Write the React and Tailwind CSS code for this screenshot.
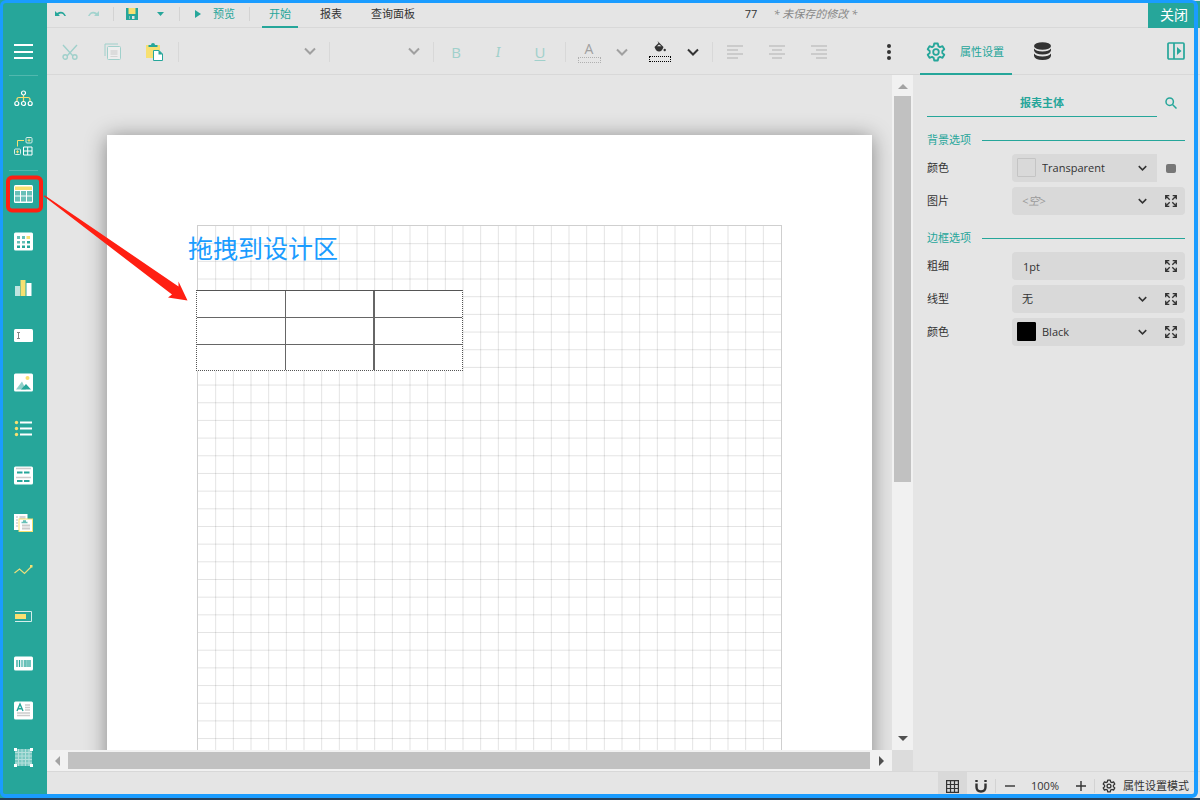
const tools = [
  { id: 'table', label: '表格' },
  { id: 'matrix', label: '矩表' },
  { id: 'chart', label: '图表' },
  { id: 'textbox', label: '文本框' },
  { id: 'image', label: '图像' },
  { id: 'list', label: '列表' },
  { id: 'banded', label: '带状列表' },
  { id: 'subreport', label: '子报表' },
  { id: 'sparkline', label: '迷你图' },
  { id: 'bullet', label: '数据条' },
  { id: 'barcode', label: '条形码' },
  { id: 'richtext', label: '富文本' },
  { id: 'container', label: '容器' },
]

const shapes = {
  tree: (
    <g fill="none" stroke="#fff" strokeWidth="1.2">
      <path d="M3 11V9.5Q3 7.5 5 7.5H14Q16 7.5 16 9.5V11M9.5 5V11" stroke="#f7e071" />
      <circle cx="9.5" cy="3" r="2" />
      <circle cx="2.8" cy="13.5" r="2" />
      <circle cx="9.5" cy="13.5" r="2" />
      <circle cx="16.2" cy="13.5" r="2" />
    </g>
  ),
  groups: (
    <g fill="none" stroke="#d5eeeb" strokeWidth="1">
      <path d="M3.5 9.5V3.5H10" stroke="#f7e071" />
      <rect x="12" y=".5" width="6" height="5.5" rx="1" />
      <rect x=".5" y="12" width="6" height="5.5" rx="1" />
      <path d="M13.5 3.3h3M15 1.8v3M2 14.8h3M3.5 13.3v3" stroke="#f7e071" />
      <path d="M9.5 10h8.5v8h-8.5zM13.7 10v8M9.5 14h8.5" stroke="#fff" />
    </g>
  ),
  table: (
    <>
      <rect width="19" height="18" rx="1.5" fill="#fff" />
      <path d="M1 1.500h17v3.500H1z" fill="#f7e071" />
      <path d="M1 6h5v4.500H1zM7 6h5v4.500H7zM13 6h5v4.500h-5zM1 11.500h5v5H1zM7 11.500h5v5H7zM13 11.500h5v5h-5z" fill="#68c0b8" />
    </>
  ),
  matrix: (
    <>
      <rect y=".5" width="19" height="18" rx="1.5" fill="#fff" />
      <path d="M3 4h3v3H3zM8 4h3v3H8zM3 9h3v2.5H3zM8 9h3v2.5H8z" fill="#68c0b8" />
      <path d="M12.5 4h3.5v3h-3.5z" fill="#f7e071" />
      <path d="M13 9h3v2.5h-3zM3 13.5h3V16H3zM8 13.5h3V16H8zM13 13.5h3V16h-3z" fill="#26a69a" />
    </>
  ),
  chart: (
    <>
      <path d="M1 7h5v10H1z" fill="#bfe4e0" />
      <path d="M6.5 1h5v16h-5z" fill="#f7e071" />
      <path d="M12.500 4h5v13h-5z" fill="#fff" />
    </>
  ),
  textbox: (
    <>
      <rect y="3" width="19" height="13" rx="1.5" fill="#fff" />
      <path d="M3 6.5h3M4.5 6.5v6M3 12.5h3" stroke="#888" fill="none" />
    </>
  ),
  image: (
    <>
      <rect y=".5" width="19" height="18" rx="1.5" fill="#fff" />
      <circle cx="13.5" cy="5" r="2" fill="#f7e071" />
      <path d="M2 16.5 8 8.5l4 8z" fill="#8fd0ca" />
      <path d="M7 16.5 12 11l5 5.5z" fill="#26a69a" />
    </>
  ),
  list: (
    <>
      <path d="M6 3.5h12M6 9.5h12M6 15.5h12" stroke="#fff" strokeWidth="2" />
      <g fill="#f7e071">
        <circle cx="2.5" cy="3.5" r="1.7" />
        <circle cx="2.5" cy="9.5" r="1.7" />
        <circle cx="2.5" cy="15.5" r="1.7" />
      </g>
    </>
  ),
  banded: (
    <>
      <rect y=".5" width="19" height="18" rx="1.5" fill="#fff" />
      <path d="M2 2.5h15M2 11.5h15" stroke="#ccc" strokeWidth="1.5" />
      <path d="M3 6.5h5.5M10 6.5h5.5M3 15h5.5M10 15h5.5" stroke="#26a69a" strokeWidth="2" />
    </>
  ),
  subreport: (
    <>
      <path d="M0 1h13.5v16H0z" fill="#fff" />
      <path d="M2 4h2M2 7h2M2 10h2M2 13h2" stroke="#bbb" />
      <path d="M5.500 3h6v3h-6z" fill="#d5d5d5" />
      <rect x="5" y="6" width="13.5" height="12.5" fill="#fff" stroke="#f7e071" />
      <path d="M7.5 9.5h6M9 8h3" stroke="#68c0b8" strokeWidth="1.5" />
      <path d="M8 12.5h8M8 15.500h8" stroke="#ccc" strokeWidth="2" />
    </>
  ),
  sparkline: (
    <>
      <path d="M.5 13 5.5 9l5 4.5 7-7" stroke="#ecdf7c" fill="none" strokeWidth="1.2" />
      <path d="M16 5h2.5v2.5H16z" fill="#f7e071" />
    </>
  ),
  bullet: (
    <>
      <path d="M1 4.5h16.5v10H1" stroke="#d5eeeb" fill="none" />
      <path d="M1 7h11v5H1z" fill="#f7e071" />
    </>
  ),
  barcode: (
    <>
      <rect y="2.5" width="19" height="14" rx="1.5" fill="#fff" />
      <path d="M3 6v7M5.5 6v7M14 6v7M16 6v7" stroke="#26a69a" strokeWidth="1.3" />
      <path d="M8 6v7M10.5 6v7M12 6v7" stroke="#68c0b8" strokeWidth="1.6" />
    </>
  ),
  richtext: (
    <>
      <rect y=".5" width="19" height="18" rx="1.5" fill="#fff" />
      <path d="M3 10 6 3l3 7M4 7.8h4" stroke="#26a69a" fill="none" strokeWidth="1.4" />
      <path d="M11 4h5M11 6.5h5M11 9h5M3 12h13M3 14.5h13" stroke="#ccc" strokeWidth="1.3" />
    </>
  ),
  container: (
    <>
      <path d="M1 1h17v17H1z" fill="#7cc9c2" />
      <path d="M4.500 1v17M8 1v17M11.500 1v17M15 1v17M1 4.500h17M1 8h17M1 11.500h17M1 15h17" stroke="#b5e0dc" />
      <path d="M0 0h3v3H0zM16 0h3v3h-3zM0 16h3v3H0zM16 16h3v3h-3z" fill="#fff" />
    </>
  ),
}

function ToolIcon({ name }) {
  return <svg viewBox="0 0 19 19" className="w-[19px] h-[19px]">{shapes[name]}</svg>
}

function Chevron({ className = '' }) {
  return (
    <svg viewBox="0 0 12 8" className={`pointer-events-none ${className}`} fill="none" stroke="currentColor" strokeWidth="2">
      <path d="M1 1.5 6 6.5 11 1.5" />
    </svg>
  )
}

function Gear({ className }) {
  return (
    <svg viewBox="0 0 20 20" className={className} fill="none" stroke="currentColor" strokeWidth="1.8" strokeLinejoin="round">
      <path d="M8.2 1h3.6l.5 2.6 1.7 1 2.5-.9 1.8 3.1-2 1.7v2l2 1.7-1.8 3.1-2.5-.9-1.7 1-.5 2.6H8.2l-.5-2.6-1.7-1-2.5.9-1.8-3.1 2-1.7v-2l-2-1.700 1.800-3.100 2.500.9 1.700-1z" transform="translate(0 .5)" />
      <circle cx="10" cy="10" r="2.8" />
    </svg>
  )
}

function Sidebar() {
  const item = 'relative flex-1 flex items-center justify-center pt-px'
  return (
    <nav className="w-[47px] shrink-0 bg-[#26a69a] flex flex-col items-stretch pt-7 pb-5">
      <button aria-label="菜单" className={item}>
        <svg viewBox="0 0 19 16" className="w-[19px] h-4" stroke="#fff" strokeWidth="2">
          <path d="M0 1h19M0 8h19M0 14h19" />
        </svg>
      </button>
      <div className="h-px mx-[9px] bg-[#51b8ae]" />
      <button aria-label="资源管理器" className={item}><ToolIcon name="tree" /></button>
      <button aria-label="分组管理器" className={item}><ToolIcon name="groups" /></button>
      <div className="h-px mx-[9px] bg-[#51b8ae]" />
      {tools.map(t => (
        <button key={t.id} aria-label={t.label} className={item}>
          <ToolIcon name={t.id} />
          {t.id === 'table' && (
            <span className="absolute left-[6px] top-1/2 -translate-y-1/2 w-[37px] h-[37px] border-4 border-[#ff1f12] rounded-md" />
          )}
        </button>
      ))}
    </nav>
  )
}

function TopBar() {
  const sep = <div className="w-px h-[14px] bg-[#d3d3d3]" />
  return (
    <header className="h-7 shrink-0 flex items-center border-b border-[#d8d8d8] pt-px">
      <button aria-label="撤销" className="w-[27px] flex justify-center text-[#26a69a]">
        <svg viewBox="0 0 11 6" className="w-[11px] h-[6px]">
          <path d="M0 0v5h5L3.5 3.5Q7 1 9.5 5L11 5Q8-1.5 2 2z" fill="currentColor" />
        </svg>
      </button>
      <button aria-label="重做" className="w-[39px] flex justify-center text-[#a3d3ce]">
        <svg viewBox="0 0 11 6" className="w-[11px] h-[6px]">
          <path d="M11 0v5H6l1.5-1.5Q4 1 1.5 5L0 5Q3-1.5 9 2z" fill="currentColor" />
        </svg>
      </button>
      {sep}
      <button aria-label="保存" className="w-9 flex justify-center">
        <svg viewBox="0 0 12 12" className="w-3 h-3">
          <path d="M0 0h12v12H0z" fill="#26a69a" />
          <path d="M2.5 0h7v6h-7z" fill="#f7e071" />
          <path d="M3.5 8h5v3h-5z" fill="#e5e5e5" />
          <path d="M4 8h2v3H4z" fill="#26a69a" />
        </svg>
      </button>
      <button aria-label="保存选项" className="w-[21px] mr-2 flex justify-center">
        <svg viewBox="0 0 7 4" className="w-[7px] h-1"><path d="M0 0h7L3.5 4z" fill="#26a69a" /></svg>
      </button>
      {sep}
      <button className="flex items-center gap-[11px] px-[14px] text-[#26a69a]">
        <svg viewBox="0 0 8 8" className="w-2 h-2"><path d="M1 0 7 4 1 8z" fill="currentColor" /></svg>
        预览
      </button>
      {sep}
      <div className="ml-3 flex gap-[15px] self-stretch -mb-px">
        <button className="px-[7px] pt-px border-b-2 border-[#26a69a] text-[#26a69a]">开始</button>
        <button className="px-[7px] pt-px border-b-2 border-transparent">报表</button>
        <button className="px-[7px] pt-px border-b-2 border-transparent">查询面板</button>
      </div>
      <div className="flex-1 flex justify-center gap-4 pl-8">
        <span>77</span>
        <span className="italic text-[#888]">* 未保存的修改 *</span>
      </div>
      <button className="self-stretch -mb-px w-[52px] bg-[#26a69a] text-white text-[14px]">关闭</button>
    </header>
  )
}

function AlignIcon({ d }) {
  return (
    <svg viewBox="0 0 16 14" className="w-4 h-[14px]" stroke="#c2c2c2" strokeWidth="1.3"><path d={d} /></svg>
  )
}

function Toolbar() {
  const sep = <div className="w-px h-5 bg-[#d8d8d8]" />
  const btn = 'w-[42px] h-8 flex items-center justify-center'
  return (
    <div className="h-[47px] shrink-0 flex items-center border-b border-[#d8d8d8] pl-[2px] pt-px">
      <button aria-label="剪切" className={btn}>
        <svg viewBox="0 0 16 16" className="w-4 h-4" fill="none" stroke="#a0d0cb" strokeWidth="1.4">
          <path d="M1 1 11 12M15 1 5 12" />
          <circle cx="3.2" cy="13" r="2.2" />
          <circle cx="12.8" cy="13" r="2.2" />
        </svg>
      </button>
      <button aria-label="复制" className={btn}>
        <svg viewBox="0 0 17 17" className="w-[17px] h-[17px]" fill="none" stroke="#a0d0cb">
          <path d="M1 13V1h13" />
          <rect x="3.5" y="3.5" width="13" height="13" rx="1" fill="#eee" />
          <path d="M6.5 7h7v5h-7z" fill="#dcdcdc" stroke="none" />
          <path d="M6.5 13.5h7" stroke="#d5d5d5" />
        </svg>
      </button>
      <button aria-label="粘贴" className={btn}>
        <svg viewBox="0 0 17 18" className="w-[17px] h-[18px]">
          <path d="M0 2h14v13H0z" fill="#f7e071" />
          <path d="M2.5 4V2H5Q5 0 7 0t2 2h2.500v2z" fill="#26a69a" />
          <path d="M7.5 7.5h5.500l3.500 3.500v6.500h-9z" fill="#fff" stroke="#26a69a" />
          <path d="M12.5 7v4.5H17z" fill="#26a69a" />
        </svg>
      </button>
      <div className="w-[3px]" />
      {sep}
      <div className="relative w-[150px]">
        <select aria-label="字体" className="appearance-none w-full h-8 bg-transparent" />
        <Chevron className="absolute right-[13px] top-[11px] w-3 h-2 text-[#a0a0a0]" />
      </div>
      {sep}
      <div className="relative w-[103px]">
        <select aria-label="字号" className="appearance-none w-full h-8 bg-transparent" />
        <Chevron className="absolute right-[13px] top-[11px] w-3 h-2 text-[#a0a0a0]" />
      </div>
      {sep}
      <div className="flex pl-px pr-1">
        <button className={`${btn} text-[15px] text-[#a0d0cb]`}>B</button>
        <button className={`${btn} text-[15px] text-[#a0d0cb] italic font-serif`}>I</button>
        <button className={`${btn} text-[15px] text-[#a0d0cb] underline underline-offset-2`}>U</button>
      </div>
      {sep}
      <button aria-label="文字颜色" className="w-[46px] flex flex-col items-center text-[14px] leading-4 text-[#a0a0a0]">
        A
        <span className="w-[23px] h-[6px] border border-dotted border-[#b0b0b0]" />
      </button>
      <button aria-label="选择文字颜色" className="w-5 flex justify-center"><Chevron className="w-3 h-2 text-[#a0a0a0]" /></button>
      <button aria-label="背景颜色" className="ml-2 w-10 flex flex-col items-center gap-1">
        <svg viewBox="0 0 12 11" className="w-3 h-[11px] text-[#333]">
          <path d="M3.5 0 9.5 6Q8 10.5 5 10.5T.5 6L4.5 2z" fill="currentColor" />
          <path d="M3 5.2 5 3.5 7.5 5.2z" fill="#e5e5e5" />
          <circle cx="10.7" cy="9" r="1.2" fill="currentColor" />
        </svg>
        <span className="w-[22px] h-[6px] border border-dotted border-black" />
      </button>
      <button aria-label="选择背景颜色" className="w-[26px] mr-[6px] flex justify-center"><Chevron className="w-3 h-2 text-[#333]" /></button>
      {sep}
      <div className="flex pl-px">
        <button aria-label="左对齐" className={btn}><AlignIcon d="M0 1h16M0 5h11M0 9h16M0 13h11" /></button>
        <button aria-label="居中" className={btn}><AlignIcon d="M0 1h16M3 5h10M0 9h16M3 13h10" /></button>
        <button aria-label="右对齐" className={btn}><AlignIcon d="M0 1h16M5 5h11M0 9h16M5 13h11" /></button>
      </div>
      <button aria-label="更多" className="ml-auto w-12 h-8 flex items-center justify-center">
        <svg viewBox="0 0 4 16" className="w-1 h-4" fill="#333">
          <circle cx="2" cy="2" r="2" />
          <circle cx="2" cy="8" r="2" />
          <circle cx="2" cy="14" r="2" />
        </svg>
      </button>
    </div>
  )
}

const COLS = 33
const ROWS = 40

function GridLines() {
  return (
    <svg className="w-full h-full" stroke="#000" strokeOpacity=".11">
      {Array.from({ length: COLS - 1 }, (_, i) => {
        const x = `${((i + 1) * 100) / COLS}%`
        return <line key={i} x1={x} x2={x} y1="0" y2="100%" />
      })}
      {Array.from({ length: ROWS - 1 }, (_, i) => {
        const y = `${((i + 1) * 100) / ROWS}%`
        return <line key={i} x1="0" x2="100%" y1={y} y2={y} />
      })}
    </svg>
  )
}

function Canvas() {
  return (
    <div className="flex-1 min-w-0 overflow-hidden pl-[60px] pr-5 pt-[60px]">
      <div className="bg-white p-[90px] shadow-[0_2px_20px_rgba(0,0,0,0.42)]">
        <div className="relative h-[709px] border border-[#cfcfcf]">
          <GridLines />
          <p className="absolute -left-[10px] top-1 text-[25px] leading-9 text-[#1a9cff] whitespace-nowrap">拖拽到设计区</p>
          <div className="absolute -left-[2px] top-16 w-[267px] border border-dotted border-[#555] bg-white [border-top-style:solid]">
            <table className="w-full table-fixed border-separate border-spacing-0">
              <colgroup>
                <col className="w-[89px]" />
                <col className="w-[89px]" />
                <col />
              </colgroup>
              <tbody>
                {[0, 1, 2].map(r => (
                  <tr key={r} className={r < 2 ? 'h-[27px] [&>td]:border-b' : 'h-[25px]'}>
                    <td className="p-0 border-r border-[#666]" />
                    <td className="p-0 border-r-2 border-[#666]" />
                    <td className="p-0 border-[#666]" />
                  </tr>
                ))}
              </tbody>
            </table>
          </div>
        </div>
      </div>
    </div>
  )
}

function Arrow({ d, className }) {
  return <svg viewBox="0 0 10 10" className={`w-[10px] h-[10px] ${className}`}><path d={d} fill="currentColor" /></svg>
}

function Workspace() {
  return (
    <main className="flex-1 min-w-0 flex flex-col">
      <Toolbar />
      <div className="flex-1 min-h-0 flex">
        <Canvas />
        <div className="w-[21px] bg-[#f1f1f1] flex flex-col items-center py-[6px]">
          <Arrow d="M0 8h10L5 3z" className="text-[#a3a3a3]" />
          <div className="flex-1 w-full px-[2px] py-[5px]">
            <div className="h-[61%] bg-[#c1c1c1]" />
          </div>
          <Arrow d="M0 2h10L5 7z" className="text-[#505050]" />
        </div>
      </div>
      <div className="h-[21px] shrink-0 flex">
        <div className="flex-1 bg-[#f1f1f1] flex items-center px-[6px]">
          <Arrow d="M7 0v10L2 5z" className="text-[#a3a3a3]" />
          <div className="flex-1 h-[17px] ml-[5px] mr-[6px] bg-[#c1c1c1]" />
          <Arrow d="M3 0v10l5-5z" className="text-[#505050]" />
        </div>
        <div className="w-[21px] bg-[#dcdcdc]" />
      </div>
    </main>
  )
}

function ExpandButton() {
  return (
    <button aria-label="高级" className="w-7 h-7 rounded-r-sm bg-[#d9d9d9] flex items-center justify-center">
      <svg viewBox="0 0 12 12" className="w-3 h-3" fill="none" stroke="#333" strokeWidth="1.3">
        <path d="M.7 4.300V.700H4.300M.7.700 4.700 4.700M7.700.700H11.300V4.300M11.300.700 7.300 4.700M.7 7.700V11.300H4.300M.7 11.300 4.700 7.300M7.700 11.300H11.300V7.700M11.300 11.300 7.300 7.300" />
      </svg>
    </button>
  )
}

function Row({ id, label, children }) {
  return (
    <div className="flex items-center h-7">
      <label htmlFor={id} className="w-[85px] shrink-0">{label}</label>
      {children}
    </div>
  )
}

function Dropdown({ id, value, swatch, muted }) {
  return (
    <div className="relative flex-1">
      {swatch && <span className={`absolute left-[5px] top-1 w-[19px] h-[19px] rounded-[1px] border ${swatch}`} />}
      <select
        id={id}
        className={`block appearance-none w-full h-7 rounded-l-sm bg-[#d9d9d9] ${swatch ? 'pl-[30px]' : 'pl-[10px]'} ${muted ? 'italic text-[#999]' : ''}`}
      >
        <option>{value}</option>
      </select>
      <Chevron className="absolute right-[10px] top-[11px] w-[9px] h-[6px] text-[#333]" />
    </div>
  )
}

function Section({ title, children }) {
  return (
    <section className="mt-[15px]">
      <h3 className="h-4 mb-[6px] flex items-center gap-[11px] text-[#26a69a] after:content-[''] after:flex-1 after:h-px after:bg-[#26a69a]">
        {title}
      </h3>
      <div className="flex flex-col gap-[5px]">{children}</div>
    </section>
  )
}

function PropertyPanel() {
  return (
    <aside className="w-[287px] shrink-0">
      <div className="h-[47px] flex items-center border-b border-[#d8d8d8] pl-[7px] pr-[15px]">
        <button className="self-stretch -mb-px flex items-center gap-[14px] px-[6px] pt-[2px] pr-2 border-b-2 border-[#26a69a] text-[#26a69a]">
          <Gear className="w-5 h-5" />
          属性设置
        </button>
        <button aria-label="数据" className="ml-[22px]">
          <svg viewBox="0 0 17 18" className="w-[17px] h-[18px]" fill="#333">
            <ellipse cx="8.5" cy="4" rx="8.5" ry="3.8" />
            <path d="M0 6.5q2 3 8.5 3t8.5-3v2q-1 4-8.5 4T0 8.5zM0 11.5q2 3 8.5 3t8.5-3v2.5q-1 4-8.5 4T0 14z" />
          </svg>
        </button>
        <button aria-label="收起面板" className="ml-auto">
          <svg viewBox="0 0 18 18" className="w-[18px] h-[18px]" fill="none" stroke="#26a69a" strokeWidth="1.700">
            <rect x="1" y="1" width="16" height="16" rx="1" />
            <path d="M7 1v16" />
            <path d="M10 5v8l4.500-4z" fill="#26a69a" stroke="none" />
          </svg>
        </button>
      </div>
      <div className="pl-[14px] pr-[15px] pt-[14px]">
        <div className="flex items-center mb-[2px]">
          <input
            aria-label="名称"
            defaultValue="报表主体"
            className="flex-1 min-w-0 h-7 pb-px border-b border-[#26a69a] bg-transparent text-center font-bold text-[#26a69a] outline-none"
          />
          <button aria-label="搜索" className="w-7 flex justify-center">
            <svg viewBox="0 0 12 12" className="w-3 h-3" fill="none" stroke="#26a69a" strokeWidth="1.5">
              <circle cx="4.7" cy="4.7" r="3.7" />
              <path d="M7.5 7.5 11.5 11.5" />
            </svg>
          </button>
        </div>
        <Section title="背景选项">
          <Row id="bg-color" label="颜色">
            <Dropdown id="bg-color" value="Transparent" swatch="border-[#c4c4c4]" />
            <button aria-label="重置" className="w-7 flex justify-center">
              <span className="w-[10px] h-[9px] rounded-xs bg-[#777]" />
            </button>
          </Row>
          <Row id="bg-image" label="图片">
            <Dropdown id="bg-image" value="<空>" muted />
            <ExpandButton />
          </Row>
        </Section>
        <Section title="边框选项">
          <Row id="border-width" label="粗细">
            <input id="border-width" defaultValue="1pt" className="flex-1 min-w-0 h-7 rounded-l-sm bg-[#d9d9d9] pl-[11px] outline-none" />
            <ExpandButton />
          </Row>
          <Row id="border-style" label="线型">
            <Dropdown id="border-style" value="无" />
            <ExpandButton />
          </Row>
          <Row id="border-color" label="颜色">
            <Dropdown id="border-color" value="Black" swatch="bg-black border-black" />
            <ExpandButton />
          </Row>
        </Section>
      </div>
    </aside>
  )
}

function StatusBar() {
  return (
    <footer className="h-[29px] shrink-0 flex items-center justify-end border-t border-[#d8d8d8] pr-[11px]">
      <button aria-label="网格" className="w-[29px] self-stretch bg-[#d9d9d9] flex items-center justify-center">
        <svg viewBox="0 0 13 13" className="w-[13px] h-[13px]" fill="none" stroke="#333" strokeWidth="1.2">
          <path d="M.6.6h11.8v11.8H.6zM4.5.6v11.8M8.5.6v11.8M.6 4.5h11.8M.6 8.5h11.8" />
        </svg>
      </button>
      <button aria-label="吸附" className="w-7 flex justify-center">
        <svg viewBox="0 0 12 13" className="w-3 h-[13px]" fill="none" stroke="#333" strokeWidth="2.4">
          <path d="M1.5 3.500V7q0 4.500 4.500 4.500T10.500 7V3.500" />
          <path d="M1.5 0v2M10.5 0v2" />
        </svg>
      </button>
      <div className="w-px h-[14px] bg-[#d3d3d3]" />
      <button aria-label="缩小" className="w-[27px] flex justify-center">
        <svg viewBox="0 0 10 10" className="w-[10px] h-[10px]" stroke="#333" strokeWidth="1.4"><path d="M0 5h10" /></svg>
      </button>
      <span className="w-11 text-center">100%</span>
      <button aria-label="放大" className="w-[27px] flex justify-center">
        <svg viewBox="0 0 10 10" className="w-[10px] h-[10px]" stroke="#333" strokeWidth="1.4"><path d="M0 5h10M5 0v10" /></svg>
      </button>
      <div className="w-px h-[14px] bg-[#d3d3d3]" />
      <button className="flex items-center gap-[7px] pl-[7px]">
        <Gear className="w-[14px] h-[14px]" />
        属性设置模式
      </button>
    </footer>
  )
}

export default function App() {
  return (
    <div className="relative h-screen flex overflow-hidden bg-[#e5e5e5] text-[#333] text-[11px] leading-4 font-['Open_Sans','Noto_Sans_CJK_SC',sans-serif]">
      <Sidebar />
      <div className="flex-1 min-w-0 flex flex-col">
        <TopBar />
        <div className="flex-1 min-h-0 flex">
          <Workspace />
          <PropertyPanel />
        </div>
        <StatusBar />
      </div>

      {/* annotations on top of the designer */}
      <svg viewBox="0 0 150 110" className="absolute left-10 top-[193px] w-[150px] h-[110px] pointer-events-none">
        <path d="M3.5 3 5 2.5 138.5 93.500V88.500L147.500 107.500 128 104.500 132 101.500z" fill="#ff1f12" />
      </svg>
      <div className="absolute inset-x-0 bottom-0 h-[2px] bg-[#24405c] pointer-events-none" />
      <div className="absolute top-0 left-0 right-[2px] bottom-[2px] border-[3px] border-r-4 border-b-4 border-[#1a9cff] rounded-md pointer-events-none" />
    </div>
  )
}
